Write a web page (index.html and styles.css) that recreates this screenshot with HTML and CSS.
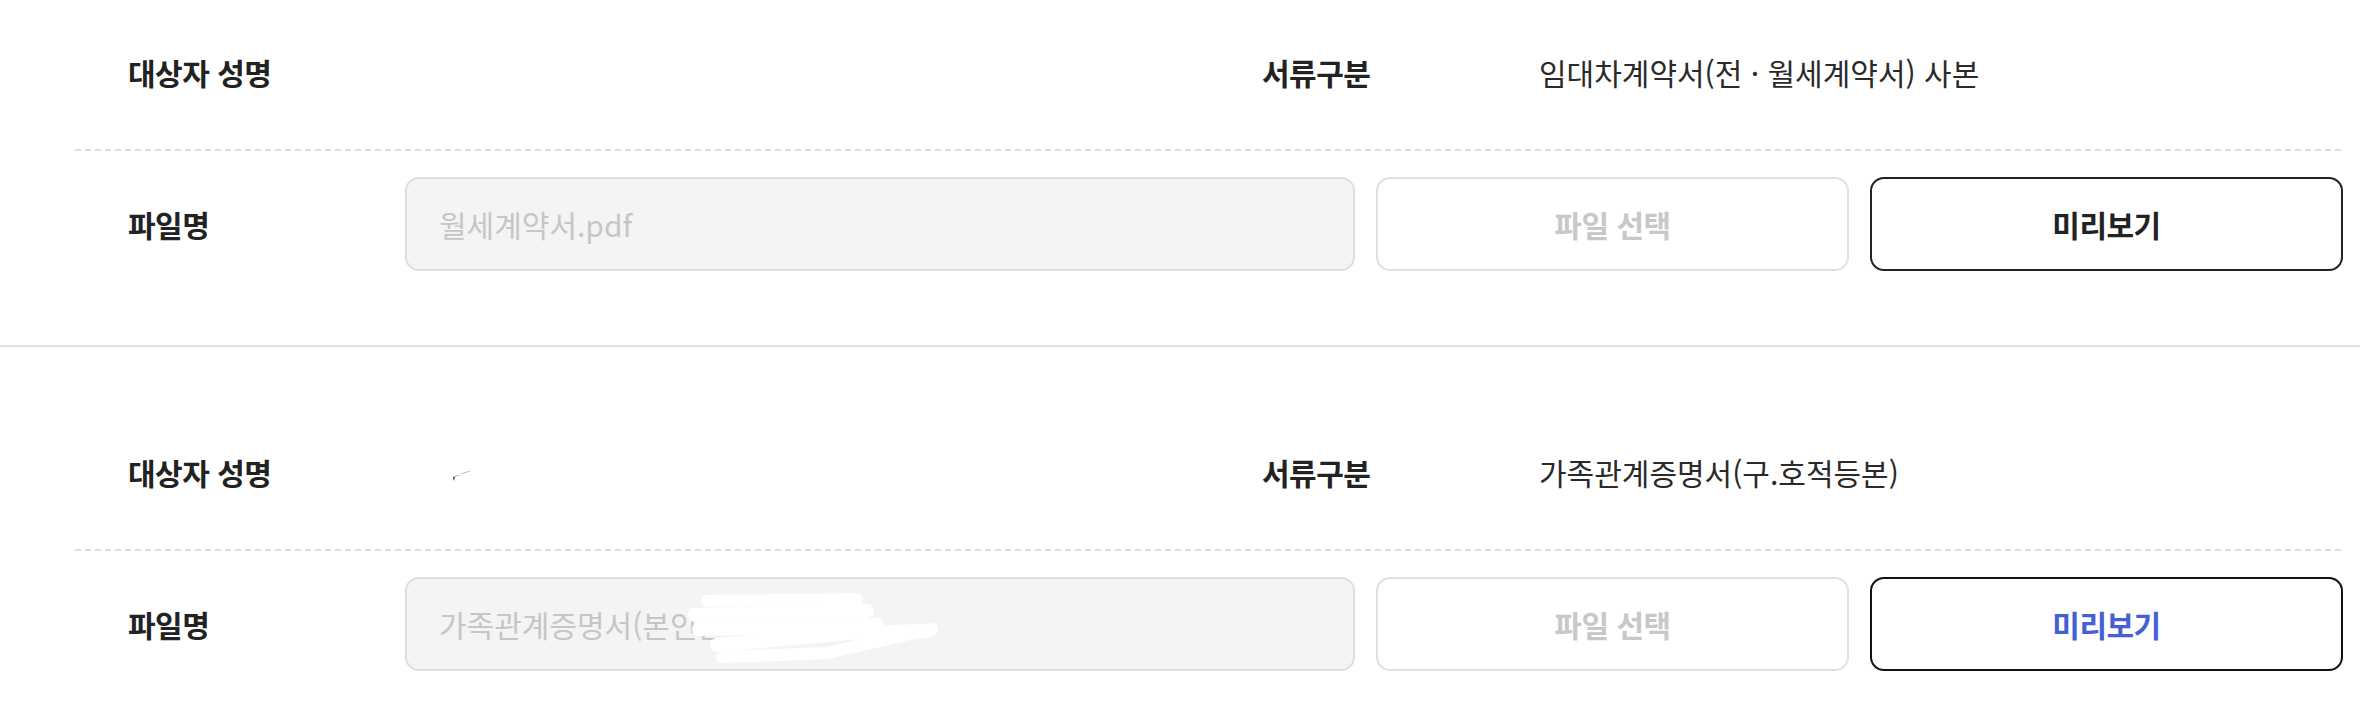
FILE: index.html
```html
<!DOCTYPE html>
<html lang="ko">
<head>
  <meta charset="UTF-8">
  <meta name="viewport" content="width=device-width, initial-scale=1.0">
  <title>제출 서류 목록</title>
  <link rel="stylesheet" href="styles.css">
</head>
<body>
<div class="doc-list">
  <section class="doc">
    <div class="doc-body">
      <div class="row row-info">
        <div class="cell">
          <div class="label">대상자 성명</div>
          <div class="value"></div>
        </div>
        <div class="cell">
          <div class="label">서류구분</div>
          <div class="value">임대차계약서(전 · 월세계약서) 사본</div>
        </div>
      </div>
      <div class="row row-file">
        <div class="label">파일명</div>
        <div class="file-name">월세계약서.pdf</div>
        <button class="btn btn-select" disabled>파일 선택</button>
        <button class="btn btn-preview">미리보기</button>
      </div>
    </div>
  </section>

  <section class="doc">
    <div class="doc-body">
      <div class="row row-info">
        <div class="cell">
          <div class="label">대상자 성명</div>
          <div class="value">
            <svg class="mark" width="24" height="12" viewBox="0 0 24 12">
              <path d="M1 8 L9 6 L3 7 L2 12 Z" fill="#222"/>
              <path d="M9 5 L18 2" stroke="#bbb" stroke-width="1"/>
            </svg>
          </div>
        </div>
        <div class="cell">
          <div class="label">서류구분</div>
          <div class="value">가족관계증명서(구.호적등본)</div>
        </div>
      </div>
      <div class="row row-file">
        <div class="label">파일명</div>
        <div class="file-name">가족관계증명서(본인ᆫ ᄃ
          <svg class="scribble" width="300" height="80" viewBox="0 0 300 80">
            <g stroke="#fff" stroke-linecap="round" fill="none">
              <path d="M30 10 L180 8" stroke-width="12"/>
              <path d="M18 24 L190 20" stroke-width="14"/>
              <path d="M22 38 L200 34" stroke-width="14"/>
              <path d="M40 54 L170 42 L250 40" stroke-width="14"/>
              <path d="M45 66 L150 62 L255 38" stroke-width="12"/>
            </g>
          </svg>
        </div>
        <button class="btn btn-select" disabled>파일 선택</button>
        <button class="btn btn-preview active">미리보기</button>
      </div>
    </div>
  </section>
</div>
</body>
</html>
```

FILE: styles.css
```css
body {
  margin: 0;
  background-color: #fff;
  font-family: "Noto Sans CJK KR", "Noto Sans", sans-serif;
  color: #222;
  overflow: hidden;
}
.doc-list {
  margin-top: -53px;
}
.doc {
  padding: 48px 0;
  border-bottom: 2px solid #e0e0e0;
}
.doc-body {
  margin: 0 17px 0 75px;
}
.row {
  display: flex;
  align-items: center;
}
.row-info {
  height: 156px;
  box-sizing: border-box;
  padding-bottom: 2px;
  background-image: repeating-linear-gradient(90deg, #dcdcdc 0 6px, transparent 6px 10px);
  background-size: 100% 2px;
  background-position: left bottom;
  background-repeat: no-repeat;
}
.cell {
  flex: 1;
  display: flex;
  align-items: center;
}
.label {
  width: 330px;
  flex-shrink: 0;
  box-sizing: border-box;
  padding-left: 53px;
  font-size: 30px;
  font-weight: bold;
  color: #222;
  letter-spacing: -0.5px;
}
.row-file .label {
  width: 309px;
}
.value {
  font-size: 30px;
  color: #2a2a2a;
}
.mark {
  display: block;
  margin-left: 47px;
  margin-top: 6px;
}
.row-file {
  height: 146px;
  gap: 21px;
}
.file-name {
  position: relative;
  flex: 2;
  height: 94px;
  box-sizing: border-box;
  display: flex;
  align-items: center;
  padding-left: 32px;
  background-color: #f4f4f4;
  border: 2px solid #dedede;
  border-radius: 14px;
  font-size: 30px;
  color: #c6c6c6;
  overflow: hidden;
  white-space: nowrap;
}
.scribble {
  position: absolute;
  left: 270px;
  top: 12px;
}
.btn {
  flex: 1;
  height: 94px;
  background-color: #fff;
  border-radius: 14px;
  font-family: inherit;
  font-size: 30px;
  font-weight: bold;
  letter-spacing: -0.5px;
  cursor: pointer;
}
.btn-select {
  border: 2px solid #e0e0e0;
  color: #c8c8c8;
  cursor: default;
}
.btn-preview {
  border: 2px solid #222;
  color: #222;
}
.btn-preview.active {
  color: #4560d4;
  border-color: #111;
}
```
